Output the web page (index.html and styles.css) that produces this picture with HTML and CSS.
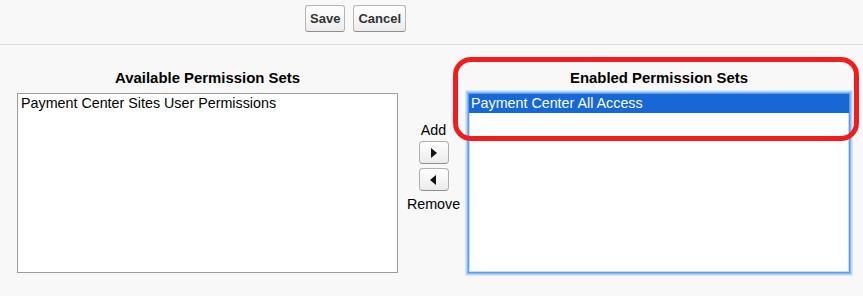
FILE: index.html
```html
<!DOCTYPE html>
<html lang="en">
<head>
    <meta charset="UTF-8">
    <title>Permission Set Assignments</title>
    <link rel="stylesheet" href="styles.css">
</head>
<body>

<div class="button-bar">
    <button class="btn">Save</button>
    <button class="btn">Cancel</button>
</div>

<div class="assign">
    <div class="column column-left">
        <div class="column-title">Available Permission Sets</div>
        <ul class="list-box">
            <li>Payment Center Sites User Permissions</li>
        </ul>
    </div>

    <div class="mover">
        <span class="mover-label">Add</span>
        <button class="arrow-btn"><span class="arrow arrow-right"></span></button>
        <button class="arrow-btn"><span class="arrow arrow-left"></span></button>
        <span class="mover-label">Remove</span>
    </div>

    <div class="column column-right">
        <div class="column-title">Enabled Permission Sets</div>
        <ul class="list-box list-box-focus">
            <li class="selected">Payment Center All Access</li>
        </ul>
    </div>

    <div class="highlight"></div>
</div>

</body>
</html>
```

FILE: styles.css
```css
* {
    box-sizing: border-box;
    margin: 0;
    padding: 0;
}

body {
    font-family: 'Liberation Sans', Arial, sans-serif;
    background-color: #f8f8f8;
    color: #000;
}

.button-bar {
    height: 45px;
    padding: 5px 0 0 305px;
    border-bottom: 1px solid #dcdcdc;
    display: flex;
    gap: 8px;
    align-items: flex-start;
}

.btn {
    height: 27px;
    padding: 0 4px;
    font-family: 'Liberation Sans', Arial, sans-serif;
    font-size: 13px;
    font-weight: bold;
    color: #333;
    background: linear-gradient(#ffffff, #ececec);
    border: 1px solid #b5b5b5;
    border-bottom-color: #8f8f8f;
    border-radius: 3px;
    cursor: pointer;
}

.assign {
    position: relative;
    display: flex;
    padding: 24px 0 0 17px;
    height: 251px;
}

.column-left {
    width: 381px;
}

.column-right {
    width: 386px;
    padding: 0 2px;
}

.column-title {
    font-size: 14.9px;
    font-weight: bold;
    line-height: 18px;
    text-align: center;
    margin-bottom: 6px;
}

.list-box {
    list-style-type: none;
    height: 180px;
    background: #fff;
    border: 1px solid #9c9c9c;
    font-size: 14.3px;
    line-height: 19px;
}

.list-box li {
    padding: 0 3px;
    white-space: nowrap;
}

.list-box-focus {
    height: 180px;
    border: 1px solid #5d9bea;
    box-shadow: 0 0 0 1px #86b8f2, 0 0 0 2.5px rgba(140, 190, 245, 0.6), inset 0 0 0 1px #c4dcf8;
}

.list-box-focus li {
    padding: 0 2px;
}

.list-box li.selected {
    background-color: #1668d6;
    color: #fff;
}

.mover {
    width: 68px;
    display: flex;
    flex-direction: column;
    align-items: center;
    padding: 52px 0 0 3px;
}

.mover-label {
    font-size: 14.3px;
    line-height: 18px;
}

.mover-label:first-child {
    margin-bottom: 2px;
}

.arrow-btn {
    width: 30px;
    height: 23px;
    margin-bottom: 4px;
    display: flex;
    align-items: center;
    justify-content: center;
    background: linear-gradient(#ffffff, #ebebeb);
    border: 1px solid #b0b0b0;
    border-bottom-color: #8f8f8f;
    border-radius: 4px;
    cursor: pointer;
}

.arrow {
    width: 0;
    height: 0;
    border-top: 5px solid transparent;
    border-bottom: 5px solid transparent;
}

.arrow-right {
    border-left: 6px solid #111;
    margin-left: 1px;
}

.arrow-left {
    border-right: 6px solid #111;
    margin-right: 1px;
}

.highlight {
    position: absolute;
    left: 453px;
    top: 12px;
    width: 406px;
    height: 84px;
    border: 5px solid #f21c1c;
    border-radius: 18px;
    pointer-events: none;
}
```
